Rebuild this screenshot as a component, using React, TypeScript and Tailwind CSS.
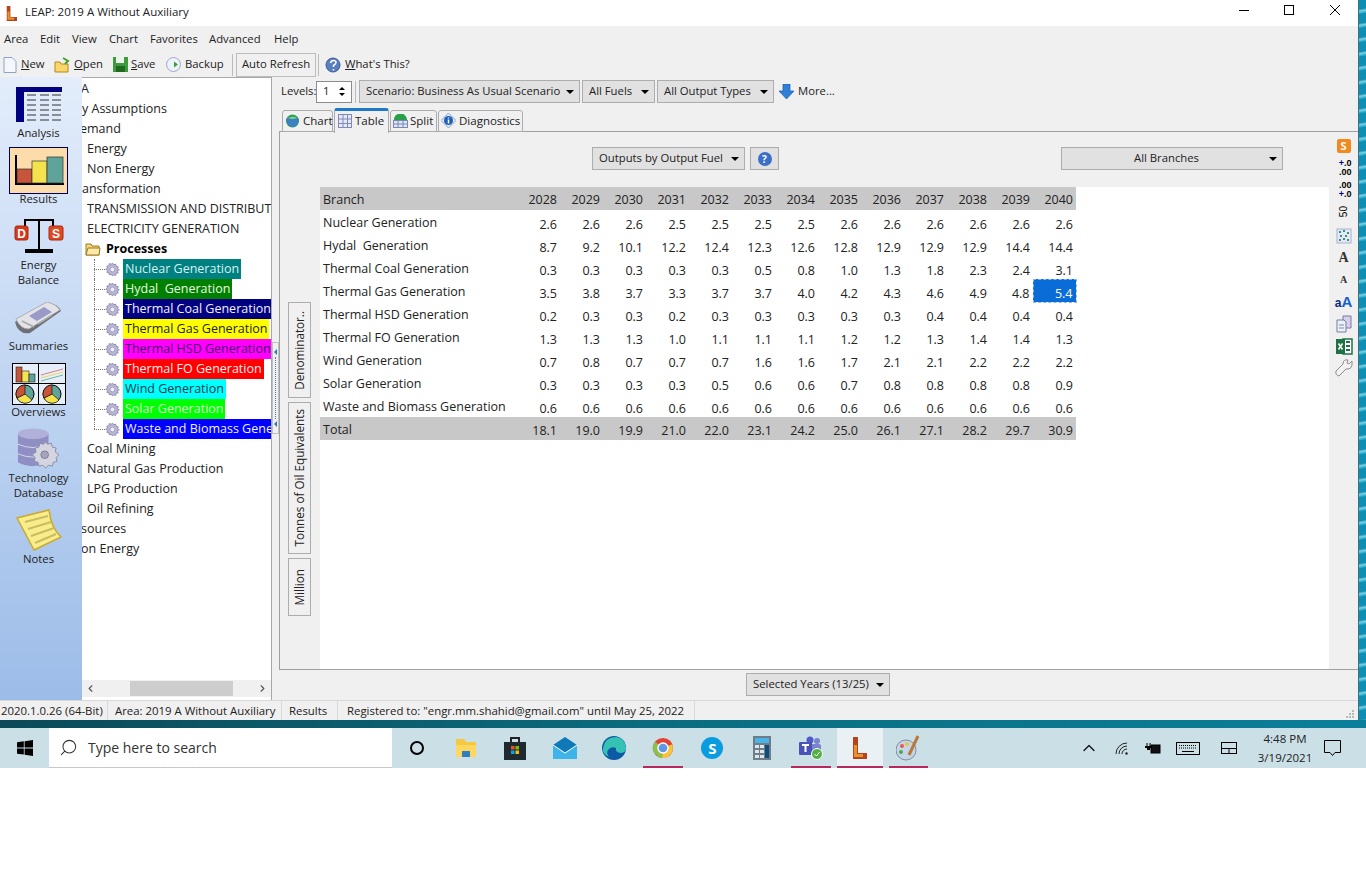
import { ReactNode } from 'react';
import { ChevronLeft, ChevronRight, ChevronUp, Search } from 'lucide-react';

const years = [2028, 2029, 2030, 2031, 2032, 2033, 2034, 2035, 2036, 2037, 2038, 2039, 2040];

const rows: [string, string[]][] = [
  ['Nuclear Generation', ['2.6', '2.6', '2.6', '2.5', '2.5', '2.5', '2.5', '2.6', '2.6', '2.6', '2.6', '2.6', '2.6']],
  ['Hydal  Generation', ['8.7', '9.2', '10.1', '12.2', '12.4', '12.3', '12.6', '12.8', '12.9', '12.9', '12.9', '14.4', '14.4']],
  ['Thermal Coal Generation', ['0.3', '0.3', '0.3', '0.3', '0.3', '0.5', '0.8', '1.0', '1.3', '1.8', '2.3', '2.4', '3.1']],
  ['Thermal Gas Generation', ['3.5', '3.8', '3.7', '3.3', '3.7', '3.7', '4.0', '4.2', '4.3', '4.6', '4.9', '4.8', '5.4']],
  ['Thermal HSD Generation', ['0.2', '0.3', '0.3', '0.2', '0.3', '0.3', '0.3', '0.3', '0.3', '0.4', '0.4', '0.4', '0.4']],
  ['Thermal FO Generation', ['1.3', '1.3', '1.3', '1.0', '1.1', '1.1', '1.1', '1.2', '1.2', '1.3', '1.4', '1.4', '1.3']],
  ['Wind Generation', ['0.7', '0.8', '0.7', '0.7', '0.7', '1.6', '1.6', '1.7', '2.1', '2.1', '2.2', '2.2', '2.2']],
  ['Solar Generation', ['0.3', '0.3', '0.3', '0.3', '0.5', '0.6', '0.6', '0.7', '0.8', '0.8', '0.8', '0.8', '0.9']],
  ['Waste and Biomass Generation', ['0.6', '0.6', '0.6', '0.6', '0.6', '0.6', '0.6', '0.6', '0.6', '0.6', '0.6', '0.6', '0.6']],
];
const totals = ['18.1', '19.0', '19.9', '21.0', '22.0', '23.1', '24.2', '25.0', '26.1', '27.1', '28.2', '29.7', '30.9'];

const menus: [string, string][] = [
  ['Area', 'w-[36px]'],
  ['Edit', 'w-[32px]'],
  ['View', 'w-[37px]'],
  ['Chart', 'w-[41px]'],
  ['Favorites', 'w-[59px]'],
  ['Advanced', 'w-[65px]'],
  ['Help', 'w-[30px]'],
];

function Caret() {
  return <span className="ml-auto shrink-0 w-0 h-0 border-x-[4px] border-x-transparent border-t-[4px] border-t-black" />;
}

function Drop({ label, className }: { label: string; className: string }) {
  return (
    <div className={`flex items-center h-[23px] pl-[6px] pr-[5px] bg-[#e1e1e1] border border-[#adadad] text-[11.300px] text-[#222] whitespace-nowrap ${className}`}>
      {label}
      <Caret />
    </div>
  );
}

function Gear() {
  return (
    <svg width="15" height="15" viewBox="0 0 16 16" className="shrink-0">
      <path d="M8 1l1.2 2 2.2-.8.4 2.3 2.3.4-.8 2.2 2 1.2-2 1.2.8 2.2-2.3.4-.4 2.3-2.2-.8L8 15l-1.2-2-2.2.8-.4-2.3-2.3-.4.8-2.2-2-1.2 2-1.2-.8-2.2 2.3-.4.4-2.3 2.2.8z" fill="#b9b6d6" stroke="#77749a" strokeWidth="0.7" />
      <circle cx="8" cy="8" r="2.6" fill="#eeeef6" stroke="#8d8ab0" strokeWidth="0.7" />
    </svg>
  );
}

function TreeLeaf({ label, bg, fg, last }: { label: string; bg: string; fg: string; last?: boolean }) {
  return (
    <div className="flex items-center h-5 relative">
      <span className={`absolute left-[12px] top-0 border-l border-dotted border-[#777] ${last ? 'h-[10px]' : 'h-5'}`} />
      <span className="ml-[12px] w-[11px] shrink-0 border-t border-dotted border-[#777]" />
      <Gear />
      <span className={`ml-[3px] shrink-0 h-5 px-[2px] leading-5 whitespace-pre ${bg} ${fg}`}>{label}</span>
    </div>
  );
}

function TreeText({ children, className = '' }: { children: ReactNode; className?: string }) {
  return <div className={`h-5 leading-5 whitespace-nowrap ${className}`}>{children}</div>;
}

function SideItem({ children, label, className = '' }: { children: ReactNode; label: ReactNode; className?: string }) {
  return (
    <div className={`flex flex-col items-center text-[11.300px] leading-[15px] text-[#222] text-center ${className}`}>
      {children}
      {label}
    </div>
  );
}

function AnalysisIcon() {
  return (
    <svg width="46" height="35" viewBox="0 0 46 35">
      <path d="M0 0h46v5H8v30H0z" fill="#000080" />
      {[8, 13, 18, 23, 28, 33].map((y) => (
        <g key={y} stroke="#333" strokeWidth="1">
          <path d={`M11 ${y}h9M24 ${y}h9M36 ${y}h9`} />
        </g>
      ))}
    </svg>
  );
}

function ResultsIcon() {
  return (
    <svg width="50" height="32" viewBox="0 0 50 32">
      <path d="M2 0v29h48" fill="none" stroke="#000" strokeWidth="2" />
      <rect x="3" y="14" width="15" height="14" fill="#c8553a" stroke="#333" strokeWidth="0.7" />
      <rect x="18" y="6" width="15" height="22" fill="#f5e34e" stroke="#333" strokeWidth="0.7" />
      <rect x="33" y="2" width="16" height="26" fill="#5fa39b" stroke="#333" strokeWidth="0.7" />
    </svg>
  );
}

function BalanceIcon() {
  return (
    <svg width="50" height="34" viewBox="0 0 50 34">
      <path d="M11 8V1h28v7M25 1v30" fill="none" stroke="#000" strokeWidth="2" />
      <rect x="11" y="30" width="28" height="4" fill="#000" />
      <rect x="1" y="7" width="13" height="14" rx="2" fill="#d9361a" stroke="#a82a12" />
      <rect x="35" y="7" width="14" height="14" rx="2" fill="#e0481f" stroke="#a82a12" />
      <text x="7.500" y="18.500" textAnchor="middle" fontSize="12" fontWeight="700" fill="#fff" fontFamily="Liberation Sans, sans-serif">D</text>
      <text x="42" y="18.500" textAnchor="middle" fontSize="12" fontWeight="700" fill="#fff" fontFamily="Liberation Sans, sans-serif">S</text>
    </svg>
  );
}

function NewsIcon() {
  return (
    <svg width="48" height="33" viewBox="0 0 48 33">
      <path d="M1 20 34 1q10 1 13 8L16 31q-12 2-15-11z" fill="#6f6f78" />
      <path d="M2 17 33 0q9 2 13 8L15 27Q6 27 2 17z" fill="#e3e3e8" stroke="#9a9aa4" strokeWidth="0.7" />
      <path d="M15 14 30 5l8 5-15 9z" fill="#9a9ac8" />
      <path d="M8 19l12 6M38 13l-14 9" stroke="#aaa" strokeWidth="1.500" />
    </svg>
  );
}

function OverviewsIcon() {
  return (
    <svg width="54" height="42" viewBox="0 0 54 42">
      <rect x="0.500" y="0.500" width="53" height="41" fill="#e6eefa" stroke="#000" />
      <path d="M26.500 0v42M0 20.500h54" stroke="#000" />
      <rect x="4" y="4" width="6" height="15" fill="#c8553a" stroke="#222" strokeWidth="0.6" />
      <rect x="10" y="8" width="7" height="11" fill="#f5e34e" stroke="#222" strokeWidth="0.6" />
      <rect x="17" y="11" width="6" height="8" fill="#5fa39b" stroke="#222" strokeWidth="0.6" />
      <path d="M29 12l22-6" stroke="#d8807a" /><path d="M29 15l22-6" stroke="#e6d660" /><path d="M29 18l22-6" stroke="#6eb3ab" />
      {[13, 40].map((cx) => (
        <g key={cx}>
          <circle cx={cx} cy="31" r="9" fill="#5fa39b" stroke="#000" />
          <path d={`M${cx} 31l-8 4a9 9 0 0 0 15 2z`} fill="#f5e34e" stroke="#000" strokeWidth="0.6" />
          <path d={`M${cx} 31V22a9 9 0 0 0-8 13z`} fill="#c8553a" stroke="#000" strokeWidth="0.6" />
        </g>
      ))}
    </svg>
  );
}

function DatabaseIcon() {
  return (
    <svg width="44" height="42" viewBox="0 0 44 44">
      <path d="M1 6v30q14 8 32 0V6z" fill="#8f8fc4" />
      <ellipse cx="17" cy="6" rx="16" ry="5.500" fill="#b0b0d8" />
      <path d="M1 17q16 7 32 0M1 27q16 7 32 0" fill="none" stroke="#d8d8ec" />
      <path d="M29 14l3 3 4-1 1 4 4 1-1 4 4 3-3 3 1 4-4 1-1 4-4-1-3 3-3-3-4 1-1-4-4-1 1-4-3-3 4-3-1-4 4-1 1-4 4 1z" fill="#d5d5e2" stroke="#8a8aa4" />
      <circle cx="29" cy="28" r="4" fill="#a5a5bd" stroke="#7d7d98" />
    </svg>
  );
}

function NotesIcon() {
  return (
    <svg width="46" height="42" viewBox="0 0 46 42">
      <path d="M1 9 33 1q2 18 12 27L18 41Q8 22 1 9z" fill="#f8ed8a" stroke="#caa92a" strokeWidth="1.500" />
      <path d="M9 13l23-6M12 20l23-7M15 27l23-8M19 34l21-9" stroke="#c9bd62" strokeWidth="2" />
    </svg>
  );
}

function TabIcon({ kind }: { kind: 'chart' | 'table' | 'split' | 'diag' }) {
  if (kind === 'table') {
    return (
      <svg width="14" height="14" viewBox="0 0 14 14" className="shrink-0">
        <rect x="0.500" y="0.500" width="13" height="13" fill="#e5e9f6" stroke="#8089b8" />
        <path d="M5 0v14M9.500 0v14M0 5h14M0 9.500h14" stroke="#8089b8" />
      </svg>
    );
  }
  if (kind === 'chart') {
    return (
      <svg width="15" height="14" viewBox="0 0 15 14" className="shrink-0">
        <circle cx="7.500" cy="7" r="6.500" fill="#28a04a" />
        <path d="M1 5q7-5 13 0-1 8-6 8Q2 13 1 5z" fill="#3f80c4" />
        <path d="M3 4q5-3 9 0-4 2-9 0z" fill="#7ed07e" />
      </svg>
    );
  }
  if (kind === 'split') {
    return (
      <svg width="15" height="14" viewBox="0 0 15 14" className="shrink-0">
        <path d="M1 7a6 6 0 0 1 13-2v2z" fill="#28a04a" />
        <rect x="0.500" y="6.500" width="14" height="7" fill="#dfe6f6" stroke="#7a86b8" />
        <path d="M5 7v7M10 7v7M0 10h15" stroke="#7a86b8" />
      </svg>
    );
  }
  return (
    <svg width="15" height="15" viewBox="0 0 15 15" className="shrink-0">
      <path d="M7.500 0 15 7.500 7.500 15 0 7.500z" fill="#dce6f6" stroke="#8fa6cc" />
      <circle cx="7.500" cy="7.500" r="4.500" fill="#1f5fb4" />
      <path d="M7.500 4.500v1M7.500 6.500v4" stroke="#fff" strokeWidth="1.500" />
    </svg>
  );
}

function Tab({ kind, label, active, className }: { kind: 'chart' | 'table' | 'split' | 'diag'; label: string; active?: boolean; className: string }) {
  return (
    <div
      className={`flex items-center pl-[2px] border-x border-[#acacac] rounded-t-[3px] text-[11.500px] text-[#222] whitespace-nowrap ${className} ${
        active ? 'h-[25px] bg-[#f0f0f0] border-t-[3px] border-t-[#1f78c8] -mb-px z-10 pb-[3px]' : 'h-[22px] pb-[1px] bg-[#f0f0f0] border-t border-t-[#acacac] border-b border-b-[#acacac]'
      }`}
    >
      <TabIcon kind={kind} />
      {label}
    </div>
  );
}

function VButton({ label, className }: { label: string; className: string }) {
  return (
    <div className={`w-[23px] flex items-center justify-center bg-[#f0f0f0] border border-[#adadad] text-[11.700px] text-[#222] whitespace-nowrap ${className}`}>
      <span className="[writing-mode:vertical-rl] rotate-180">{label}</span>
    </div>
  );
}

function RightToolbar() {
  return (
    <div className="w-[29px] shrink-0 bg-[#f0f0f0] flex flex-col items-center pt-[4px] gap-[2px] text-black">
      <div className="w-5 h-5 flex items-center justify-center">
        <span className="w-[14px] h-[14px] bg-[#f08a1e] rounded-[2px] text-white text-[11px] font-bold leading-[14px] text-center">S</span>
      </div>
      <div className="w-5 h-5 leading-[9px] text-[9px] font-bold text-right pr-[2px] pt-[1px] [font-family:'Liberation_Sans',sans-serif]"><span className="text-[#000080]">+</span>.0<br />.00</div>
      <div className="w-5 h-5 leading-[9px] text-[9px] font-bold text-right pr-[2px] pt-[1px] [font-family:'Liberation_Sans',sans-serif]">.00<br /><span className="text-[#000080]">+</span>.0</div>
      <div className="w-5 h-5 flex items-center justify-center text-[10px] [font-family:'Liberation_Sans',sans-serif]">
        <span className="[writing-mode:vertical-rl] rotate-180">50</span>
      </div>
      <svg width="20" height="20" viewBox="0 0 20 20" className="mt-[2px]">
        <rect x="3" y="3" width="14" height="14" fill="#e4e9f6" stroke="#a8b0cc" />
        <path d="M5 6h2M9 5h2M13 7h2M6 10h2M11 10h2M5 14h2M9 13h2M13 14h2" stroke="#3d8f7e" strokeWidth="2" />
      </svg>
      <div className="w-5 h-5 text-center text-[14px] font-bold leading-5 text-[#333] [font-family:'Liberation_Serif',serif]">A</div>
      <div className="w-5 h-5 text-center text-[10px] font-bold leading-5 text-[#333] [font-family:'Liberation_Serif',serif]">A</div>
      <div className="w-5 h-5 text-center font-bold leading-5 [font-family:'Liberation_Sans',sans-serif]">
        <span className="text-[12px] text-[#0a2a80]">a</span><span className="text-[15px] text-[#1560c8]">A</span>
      </div>
      <svg width="20" height="20" viewBox="0 0 20 20">
        <path d="M9 2h8v12H9z" fill="#d9cfe8" stroke="#7d78a8" />
        <path d="M3 6h7l2 2v10H3z" fill="#eef0f8" stroke="#6f7fa8" />
        <path d="M5 11h5M5 14h5" stroke="#7d8cb0" />
      </svg>
      <svg width="20" height="20" viewBox="0 0 20 20">
        <rect x="9" y="3" width="9" height="15" fill="#fff" stroke="#1e7145" strokeWidth="1.500" />
        <path d="M12 6h4M12 10h4M12 14h4" stroke="#1e7145" strokeWidth="2" />
        <rect x="2" y="3" width="9" height="15" fill="#1e7145" />
        <path d="M4.500 7.500l4 6M8.500 7.500l-4 6" stroke="#fff" strokeWidth="1.500" />
      </svg>
      <svg width="20" height="20" viewBox="0 0 20 20">
        <path d="M18 3l-3 3-2-1 1-3Q9 1 9 6L2 13q-1 4 3 5l7-7q7 1 6-8z" fill="#f2f2f2" stroke="#8c8c8c" />
      </svg>
    </div>
  );
}

function TaskIcon({ children, underline }: { children: ReactNode; underline?: boolean }) {
  return (
    <div className="w-[49.300px] shrink-0 flex items-center justify-center relative">
      {children}
      {underline && <span className="absolute left-[5px] right-[5px] bottom-0 h-[2px] bg-[#b8285c]" />}
    </div>
  );
}

function LeapLogo({ small }: { small?: boolean }) {
  return (
    <svg width={small ? 11 : 15} height={small ? 15 : 22} viewBox="0 0 15 22" preserveAspectRatio="none">
      <path d="M1 0h5v16h9v6H1z" fill="#b5431e" />
      <path d="M2 8h3v9h6v3H2z" fill="#e8912e" />
    </svg>
  );
}

function Taskbar() {
  return (
    <div className="h-[40px] bg-[#cbdfe6] flex items-stretch relative text-[#111]">
      <div className="w-[49px] flex items-center justify-center">
        <svg width="16" height="16" viewBox="0 0 16 16"><path d="M0 2.300 6.800 1.300v6.200H0zM7.600 1.200 16 0v7.500H7.600zM0 8.400h6.800v6.200L0 13.700zM7.600 8.400H16V16l-8.400-1.200z" fill="#000" /></svg>
      </div>
      <div className="w-[343px] bg-white flex items-center pl-[10px] gap-[10px] text-[14px] text-[#333] border-b border-[#c8c8c8]">
        <Search size={19} strokeWidth={1.300} className="-scale-x-100" />
        Type here to search
      </div>
      <TaskIcon><span className="w-[14px] h-[14px] rounded-full border-[2px] border-black" /></TaskIcon>
      <TaskIcon>
        <svg width="22" height="20" viewBox="0 0 22 20"><path d="M1 1h8l2 3h10v15H1z" fill="#f5c842" /><rect x="1" y="7" width="20" height="12" fill="#ffd75e" /><rect x="7" y="13" width="8" height="6" fill="#2f7fc0" /></svg>
      </TaskIcon>
      <TaskIcon>
        <svg width="22" height="24" viewBox="0 0 22 24"><path d="M7 6V2h8v4" fill="none" stroke="#222" strokeWidth="2" /><rect x="0" y="6" width="22" height="18" fill="#1f2a30" /><rect x="7" y="10" width="3.500" height="3.500" fill="#f25022" /><rect x="11.500" y="10" width="3.500" height="3.500" fill="#7fba00" /><rect x="7" y="14.500" width="3.500" height="3.500" fill="#00a4ef" /><rect x="11.500" y="14.500" width="3.500" height="3.500" fill="#ffb900" /></svg>
      </TaskIcon>
      <TaskIcon>
        <svg width="24" height="22" viewBox="0 0 24 22"><path d="M0 8 12 0l12 8v14H0z" fill="#0f78b8" /><path d="M0 8l12 8 12-8v14H0z" fill="#3fb4e8" /><path d="M0 8l12 8 12-8" fill="none" stroke="#fff" /></svg>
      </TaskIcon>
      <TaskIcon>
        <svg width="24" height="24" viewBox="0 0 24 24"><circle cx="12" cy="12" r="12" fill="#0c59a4" /><path d="M1 12Q3 1 14 1q9 1 10 11 0 5-6 5-5-1-4-5-5-2-8 2-2 3 1 7-7-3-6-9z" fill="#35c1b4" /></svg>
      </TaskIcon>
      <TaskIcon underline>
        <svg width="22" height="24" viewBox="0 0 24 24"><circle cx="12" cy="12" r="11" fill="#e34133" /><path d="M12 12 3 5v0a11 11 0 0 0-1 12l6 6 3 0z" fill="#8ebf52" /><path d="M12 12 22 8a11 11 0 0 1-11 15z" fill="#f6c63a" /><circle cx="12" cy="12" r="5.500" fill="#5f97e8" stroke="#fff" strokeWidth="1.500" /></svg>
      </TaskIcon>
      <TaskIcon><span className="w-[22px] h-[22px] rounded-full bg-[#0a9ce0] text-white font-bold text-[15px] text-center leading-[22px]">S</span></TaskIcon>
      <TaskIcon>
        <svg width="18" height="24" viewBox="0 0 18 24"><rect width="18" height="24" fill="#6e7d88" /><rect x="2" y="2" width="14" height="5" fill="#4ab4e8" /><g fill="#dfe6ea"><rect x="2" y="9" width="4" height="3" /><rect x="7" y="9" width="4" height="3" /><rect x="2" y="14" width="4" height="3" /><rect x="7" y="14" width="4" height="3" /><rect x="2" y="19" width="4" height="3" /><rect x="7" y="19" width="4" height="3" /></g><rect x="12" y="9" width="4" height="13" fill="#0e4c7c" /></svg>
      </TaskIcon>
      <TaskIcon underline>
        <svg width="24" height="24" viewBox="0 0 24 24"><circle cx="18" cy="5" r="3" fill="#7b83d0" /><circle cx="11" cy="4" r="3.500" fill="#5059c9" /><rect x="11" y="8" width="11" height="11" rx="2" fill="#7b83d0" /><rect x="0" y="6" width="13" height="13" rx="1" fill="#4a52b8" /><path d="M3 9h7M6.500 9v7" stroke="#fff" strokeWidth="2" /><circle cx="18" cy="18" r="5.500" fill="#52b043" stroke="#fff" /><path d="m15.500 18 2 2 3-4" stroke="#fff" fill="none" /></svg>
      </TaskIcon>
      <div className="w-[46px] ml-[1px] bg-[#e9f1f4] flex items-center justify-center relative">
        <LeapLogo />
        <span className="absolute left-0 right-0 bottom-0 h-[2px] bg-[#b8285c]" />
      </div>
      <div className="w-[49.300px] ml-[1px] shrink-0 flex items-center justify-center relative">
        <svg width="24" height="26" viewBox="0 0 24 26"><ellipse cx="10" cy="15" rx="10" ry="10" fill="#c6d6e6" stroke="#7a8fa5" /><circle cx="6" cy="11" r="2" fill="#e65b50" /><circle cx="11" cy="9" r="2" fill="#e8c440" /><circle cx="5" cy="17" r="2" fill="#4fa84f" /><path d="M22 1 13 20" stroke="#b87a3a" strokeWidth="3" /></svg>
        <span className="absolute left-[5px] right-[5px] bottom-0 h-[2px] bg-[#b8285c]" />
      </div>
      <div className="flex-1" />
      <div className="flex items-center gap-[15px] mr-[9px]">
        <ChevronUp size={20} strokeWidth={1.500} />
        <svg width="16" height="16" viewBox="0 0 16 16" fill="none" stroke="#222" strokeWidth="1">
          <path d="M2 14A11 11 0 0 1 13 3M5 14a8 8 0 0 1 8-8M8 14a5 5 0 0 1 5-5" />
          <circle cx="12.500" cy="13.500" r="1.200" fill="#222" stroke="none" />
        </svg>
        <svg width="16" height="11" viewBox="0 0 16 11"><path d="M2 0v3M5 0v3" stroke="#000" /><rect x="6" y="2" width="9" height="8" fill="#111" stroke="#000" /><path d="M0 3h7v2H5v2H2V5H0z" fill="#000" /></svg>
        <svg width="24" height="13" viewBox="0 0 24 13"><rect x="0.500" y="0.500" width="23" height="12" fill="none" stroke="#000" /><path d="M3 3.500h18M3 6h18" stroke="#000" strokeDasharray="1 1" /><path d="M6 9.500h12" stroke="#000" /></svg>
        <svg width="16" height="12" viewBox="0 0 16 12" className="ml-[6px]"><rect x="0.500" y="0.500" width="15" height="11" fill="none" stroke="#000" /><path d="M0 6.500h16M8 6.500V12" stroke="#000" /></svg>
      </div>
      <div className="w-[78px] text-center text-[11.500px] leading-[19px] pt-[1px] text-[#222]">
        4:48 PM<br />3/19/2021
      </div>
      <div className="w-[42px] flex items-center">
        <svg width="17" height="16" viewBox="0 0 17 16"><path d="M0.500 0.500h16v12H11l-2.500 3-2.500-3H0.500z" fill="none" stroke="#000" /></svg>
      </div>
    </div>
  );
}

export default function App() {
  return (
    <div className="relative w-[1366px] h-[876px] bg-white overflow-hidden [font-family:'Open_Sans','Noto_Sans',sans-serif] text-[12px]">
      <div className="h-[768px] flex flex-col">
        <div className="flex h-[720px]">
          {/* app window */}
          <div className="w-[1359px] flex flex-col bg-[#f0f0f0] border-r border-[#4a6a74]">
            <div className="h-[26px] bg-white flex items-center pl-[6px] shrink-0">
              <LeapLogo small />
              <span className="ml-[8px] mb-[2px] text-[#222] text-[11.500px]">LEAP: 2019 A Without Auxiliary</span>
              <div className="ml-auto flex items-center mb-[6px]">
                <span className="w-[10px] border-t border-black mr-[35px]" />
                <span className="w-[10px] h-[10px] border border-black mr-[35px]" />
                <svg width="12" height="12" viewBox="0 0 12 12" className="mr-[17px]"><path d="M1 1l10 10M11 1 1 11" stroke="#000" /></svg>
              </div>
            </div>

            <div className="h-[26px] flex items-center pl-[4px] text-[#222] text-[11.300px] shrink-0">
              {menus.map(([m, w]) => <span key={m} className={w}>{m}</span>)}
            </div>

            <div className="h-[25px] flex items-center pl-[3px] text-[#222] text-[11.300px] whitespace-nowrap shrink-0">
              <svg width="14" height="16" viewBox="0 0 14 16" className="shrink-0"><path d="M1 .5h8l4 4v11H1z" fill="#f4f8fe" stroke="#8aa4c8" /></svg>
              <span className="ml-[4px] w-[24px]"><u>N</u>ew</span>
              <svg width="17" height="16" viewBox="0 0 17 16" className="ml-[9px] shrink-0"><path d="M1 5h5l1 2h7v8H1z" fill="#f8d66a" stroke="#b08a20" /><path d="M9 1l5 3-3 3" fill="none" stroke="#4aa02c" strokeWidth="2" /></svg>
              <span className="ml-[3px] w-[29px]"><u>O</u>pen</span>
              <svg width="15" height="15" viewBox="0 0 15 15" className="ml-[10px] shrink-0"><rect width="15" height="15" fill="#3f9a3f" /><rect x="3" y="0" width="8" height="6" fill="#e8f4e8" /><rect x="3" y="9" width="9" height="6" fill="#1f6a1f" /></svg>
              <span className="ml-[3px] w-[25px]"><u>S</u>ave</span>
              <svg width="15" height="15" viewBox="0 0 15 15" className="ml-[10px] shrink-0"><circle cx="7.500" cy="7.500" r="7" fill="#eef2fa" stroke="#9aa8c8" /><path d="M3 7.500h5V4.500l4 3-4 3v-3z" fill="#3aa03a" /></svg>
              <span className="ml-[4px] w-[39px]">Backup</span>
              <span className="ml-[8px] h-[22px] border-l border-[#bbb]" />
              <div className="ml-[3px] h-[24px] w-[80px] border border-[#bdbdbd] flex items-center justify-center">Auto Refresh</div>
              <span className="ml-[2px] h-[22px] border-l border-[#bbb]" />
              <svg width="16" height="16" viewBox="0 0 16 16" className="ml-[6px] shrink-0"><circle cx="8" cy="8" r="7" fill="#5a7ec0" stroke="#3a5a9a" /><path d="M5.500 6q.5-2.500 3-2.500t2.500 2q0 1.500-2.500 3v1.500M8.500 12v1.500" fill="none" stroke="#fff" strokeWidth="1.500" /></svg>
              <span className="ml-[4px]"><u>W</u>hat's This?</span>
            </div>

            <div className="flex flex-1 min-h-0">
              {/* left nav */}
              <div className="w-[82px] shrink-0 flex flex-col items-center pr-[5px] bg-[linear-gradient(180deg,#e3edfb,#9cbce8)]">
                <SideItem label="Analysis" className="mt-[10px]"><AnalysisIcon /><span className="h-[3px]" /></SideItem>
                <SideItem label={<span className="-mt-[3px]">Results</span>} className="mt-[7px]">
                  <div className="w-[59px] h-[47px] border border-[#000060] bg-[#fcdcaa] flex items-center justify-center"><ResultsIcon /></div>
                </SideItem>
                <SideItem label={<>Energy<br />Balance</>} className="mt-[13px]"><BalanceIcon /><span className="h-[4px]" /></SideItem>
                <SideItem label="Summaries" className="mt-[15px]"><NewsIcon /><span className="h-[3px]" /></SideItem>
                <SideItem label={<span className="-mt-[1px]">Overviews</span>} className="mt-[10px]"><OverviewsIcon /></SideItem>
                <SideItem label={<>Technology<br />Database</>} className="mt-[9px]"><DatabaseIcon /></SideItem>
                <SideItem label="Notes" className="mt-[9px]"><NotesIcon /></SideItem>
              </div>

              {/* tree */}
              <div className="w-[190px] shrink-0 flex flex-col bg-white border-t border-r border-[#a8a8a8]">
                <div className="flex-1 overflow-hidden pt-px text-[12.500px] text-[#222] min-h-0">
                  <TreeText className="-ml-[1px]">A</TreeText>
                  <TreeText>y Assumptions</TreeText>
                  <TreeText className="-ml-[2px]">emand</TreeText>
                  <TreeText className="pl-[5px]">Energy</TreeText>
                  <TreeText className="pl-[5px]">Non Energy</TreeText>
                  <TreeText>ansformation</TreeText>
                  <TreeText className="pl-[5px]">TRANSMISSION AND DISTRIBUTION</TreeText>
                  <TreeText className="pl-[5px]">ELECTRICITY GENERATION</TreeText>
                  <div className="flex items-center h-5 pl-[3px]">
                    <svg width="16" height="14" viewBox="0 0 16 14"><path d="M1 2h5l1 2h7v9H1z" fill="#f5d67a" stroke="#9c7c22" /><path d="M1 13l2-7h12l-1 7z" fill="#fbe9a8" stroke="#9c7c22" /></svg>
                    <span className="ml-[5px] font-bold text-black">Processes</span>
                  </div>
                  <TreeLeaf label="Nuclear Generation" bg="bg-[#008080]" fg="text-[#d8f2f2]" />
                  <TreeLeaf label="Hydal  Generation" bg="bg-[#008000]" fg="text-[#eafbe0]" />
                  <TreeLeaf label="Thermal Coal Generation" bg="bg-[#000080]" fg="text-[#f2f2ff]" />
                  <TreeLeaf label="Thermal Gas Generation" bg="bg-[#ffff00]" fg="text-[#222]" />
                  <TreeLeaf label="Thermal HSD Generation" bg="bg-[#ff00ff]" fg="text-[#4a0a6a]" />
                  <TreeLeaf label="Thermal FO Generation" bg="bg-[#ff0000]" fg="text-[#ffecec]" />
                  <TreeLeaf label="Wind Generation" bg="bg-[#00ffff]" fg="text-[#0a3a4a]" />
                  <TreeLeaf label="Solar Generation" bg="bg-[#00ff00]" fg="text-[#d8ffd0]" />
                  <TreeLeaf label="Waste and Biomass Generation" bg="bg-[#0000ff]" fg="text-[#f0f0ff]" last />
                  <TreeText className="pl-[5px]">Coal Mining</TreeText>
                  <TreeText className="pl-[5px]">Natural Gas Production</TreeText>
                  <TreeText className="pl-[5px]">LPG Production</TreeText>
                  <TreeText className="pl-[5px]">Oil Refining</TreeText>
                  <TreeText className="-ml-[1px]">sources</TreeText>
                  <TreeText className="-ml-[1px]">on Energy</TreeText>
                </div>
                <div className="h-[17px] bg-[#f0f0f0] flex items-center justify-between px-[3px] relative shrink-0 mb-[3px]">
                  <ChevronLeft size={11} strokeWidth={2.500} className="text-[#555]" />
                  <span className="absolute left-[48px] w-[103px] h-[15px] bg-[#cdcdcd]" />
                  <ChevronRight size={11} strokeWidth={2.500} className="text-[#555]" />
                </div>
              </div>

              {/* splitter */}
              <div className="w-[7px] shrink-0">
                <div className="mt-[265px] w-[7px] h-[92px] border border-[#c0c0c0] flex flex-col items-center justify-between py-[6px]">
                  <span className="w-0 h-0 border-y-[3px] border-y-transparent border-r-[3px] border-r-[#2a78b8]" />
                  <span className="flex-1 border-l border-dotted border-[#4a7ab0] my-[2px]" />
                  <span className="w-0 h-0 border-y-[3px] border-y-transparent border-r-[3px] border-r-[#2a78b8]" />
                </div>
              </div>

              {/* results pane */}
              <div className="flex-1 min-w-0 flex flex-col">
                <div className="h-[26px] pt-[3px] flex items-center pl-[2px] shrink-0 text-[#222] text-[11.300px] whitespace-nowrap">
                  <span className="w-[35px]">Levels:</span>
                  <div className="w-[36px] h-[22px] bg-white border border-[#8c8c8c] flex items-center justify-between px-[6px]">
                    1
                    <span className="flex flex-col gap-[3px]">
                      <span className="w-0 h-0 border-x-[3px] border-x-transparent border-b-[3px] border-b-black" />
                      <span className="w-0 h-0 border-x-[3px] border-x-transparent border-t-[3px] border-t-black" />
                    </span>
                  </div>
                  <span className="ml-[3px] h-[22px] border-l border-[#bbb]" />
                  <Drop label="Scenario: Business As Usual Scenario" className="ml-[3px] w-[221px]" />
                  <Drop label="All Fuels" className="ml-[2px] w-[73px]" />
                  <Drop label="All Output Types" className="ml-[2px] w-[117px]" />
                  <svg width="15" height="15" viewBox="0 0 15 15" className="ml-[5px]"><path d="M4 0h7v7h4l-7.500 8L0 7h4z" fill="#2f7fd8" stroke="#1a5aa8" strokeWidth="0.700" /></svg>
                  <span className="ml-[4px]">More...</span>
                </div>
                <div className="h-[29px] flex items-end pl-[3px] gap-px shrink-0 relative">
                  <Tab kind="chart" label="Chart" className="w-[51px] gap-[3px]" />
                  <Tab kind="table" label="Table" active className="w-[55px] pl-[3px] gap-[3px]" />
                  <Tab kind="split" label="Split" className="w-[47px] gap-[2px]" />
                  <Tab kind="diag" label="Diagnostics" className="w-[85px] gap-[3px]" />
                </div>

                <div className="flex-1 min-h-0 flex flex-col border-t border-[#a0a0a0] -mt-px">
                  <div className="flex flex-1 min-h-0 border-b border-l border-[#a0a0a0]">
                    {/* denominator and scale buttons */}
                    <div className="w-[40px] shrink-0 flex flex-col pt-[170px] pl-[8px] gap-[4px]">
                      <VButton label="Denominator.." className="h-[96px]" />
                      <VButton label="Tonnes of Oil Equivalents" className="h-[152px]" />
                      <VButton label="Million" className="h-[58px]" />
                    </div>
                    <div className="flex-1 min-w-0 flex flex-col">
                      <div className="h-[55px] flex items-start shrink-0 pt-[15px]">
                        <Drop label="Outputs by Output Fuel" className="ml-[272px] w-[153px]" />
                        <div className="ml-[5px] w-[29px] h-[23px] bg-[#e1e1e1] border border-[#adadad] flex items-center justify-center">
                          <span className="w-[14px] h-[14px] rounded-full bg-[#3a6fc8] text-white text-[10px] font-bold leading-[14px] text-center">?</span>
                        </div>
                        <Drop label="All Branches" className="ml-[282px] w-[222px] pl-[72px]" />
                      </div>
                      <div className="flex-1 min-h-0 bg-white">
                        <table className="border-collapse table-fixed w-[756px] text-[#222] text-[12.500px] leading-[15px]">
                          <thead>
                            <tr className="h-[23px] bg-[#c8c8c8]">
                              <th className="w-[197px] font-normal text-left pl-[3px] pr-0 pb-0 pt-[2px]">Branch</th>
                              {years.map((y) => <th key={y} className="w-[43px] font-normal text-right pr-[3px] pl-0 pb-0 pt-[2px]">{y}</th>)}
                            </tr>
                          </thead>
                          <tbody>
                            {rows.map(([name, vals], r) => (
                              <tr key={name} className="h-[23px]">
                                <td className="pl-[3px] pr-0 pb-0 pt-[1px] whitespace-pre">{name}</td>
                                {vals.map((v, c) => (
                                  <td key={c} className={`pl-0 pb-0 pt-[6px] text-right pr-[3px] ${r === 3 && c === 12 ? 'bg-[#0a6cd6] text-white border border-dashed border-[#8ab8ea]' : ''}`}>{v}</td>
                                ))}
                              </tr>
                            ))}
                            <tr className="h-[23px] bg-[#c8c8c8]">
                              <td className="pl-[3px] pr-0 pb-0 pt-[1px]">Total</td>
                              {totals.map((v, c) => <td key={c} className="pl-0 pb-0 pt-[3px] text-right pr-[3px]">{v}</td>)}
                            </tr>
                          </tbody>
                        </table>
                      </div>
                    </div>
                    <RightToolbar />
                  </div>
                  <div className="h-[30px] shrink-0 flex items-start pt-[3px] pl-[467px]">
                    <Drop label="Selected Years (13/25)" className="w-[144px]" />
                  </div>
                </div>
              </div>
            </div>

            {/* status bar */}
            <div className="h-[20px] shrink-0 flex items-center border-t border-[#d8d8d8] text-[#222] text-[11.400px] whitespace-nowrap">
              <div className="w-[108px] pl-[1px] h-full leading-[19px] border-r border-[#d8d8d8]">2020.1.0.26 (64-Bit)</div>
              <div className="w-[174px] pl-[7px] h-full leading-[19px] border-r border-[#d8d8d8]">Area: 2019 A Without Auxiliary</div>
              <div className="w-[56px] pl-[7px] h-full leading-[19px] border-r border-[#d8d8d8]">Results</div>
              <div className="w-[357px] pl-[9px] h-full leading-[19px] border-r border-[#d8d8d8]">Registered to: "engr.mm.shahid@gmail.com" until May 25, 2022</div>
              <svg width="10" height="10" viewBox="0 0 10 10" className="ml-auto mr-[3px] mt-[6px]">
                <path d="M7 1h2v2H7zM4 4h2v2H4zM7 4h2v2H7zM1 7h2v2H1zM4 7h2v2H4zM7 7h2v2H7z" fill="#b8b8b8" />
              </svg>
            </div>
          </div>
          <div className="flex-1 bg-[repeating-linear-gradient(170deg,#0b8fb4_0px,#0b8fb4_9px,#7cd0e4_11px,#0a9cc0_14px)]" />
        </div>
        <div className="h-[8px] shrink-0 bg-[linear-gradient(90deg,#0b4a58,#0a6e80_50%,#0b7f9a)]" />
        <Taskbar />
      </div>
    </div>
  );
}
